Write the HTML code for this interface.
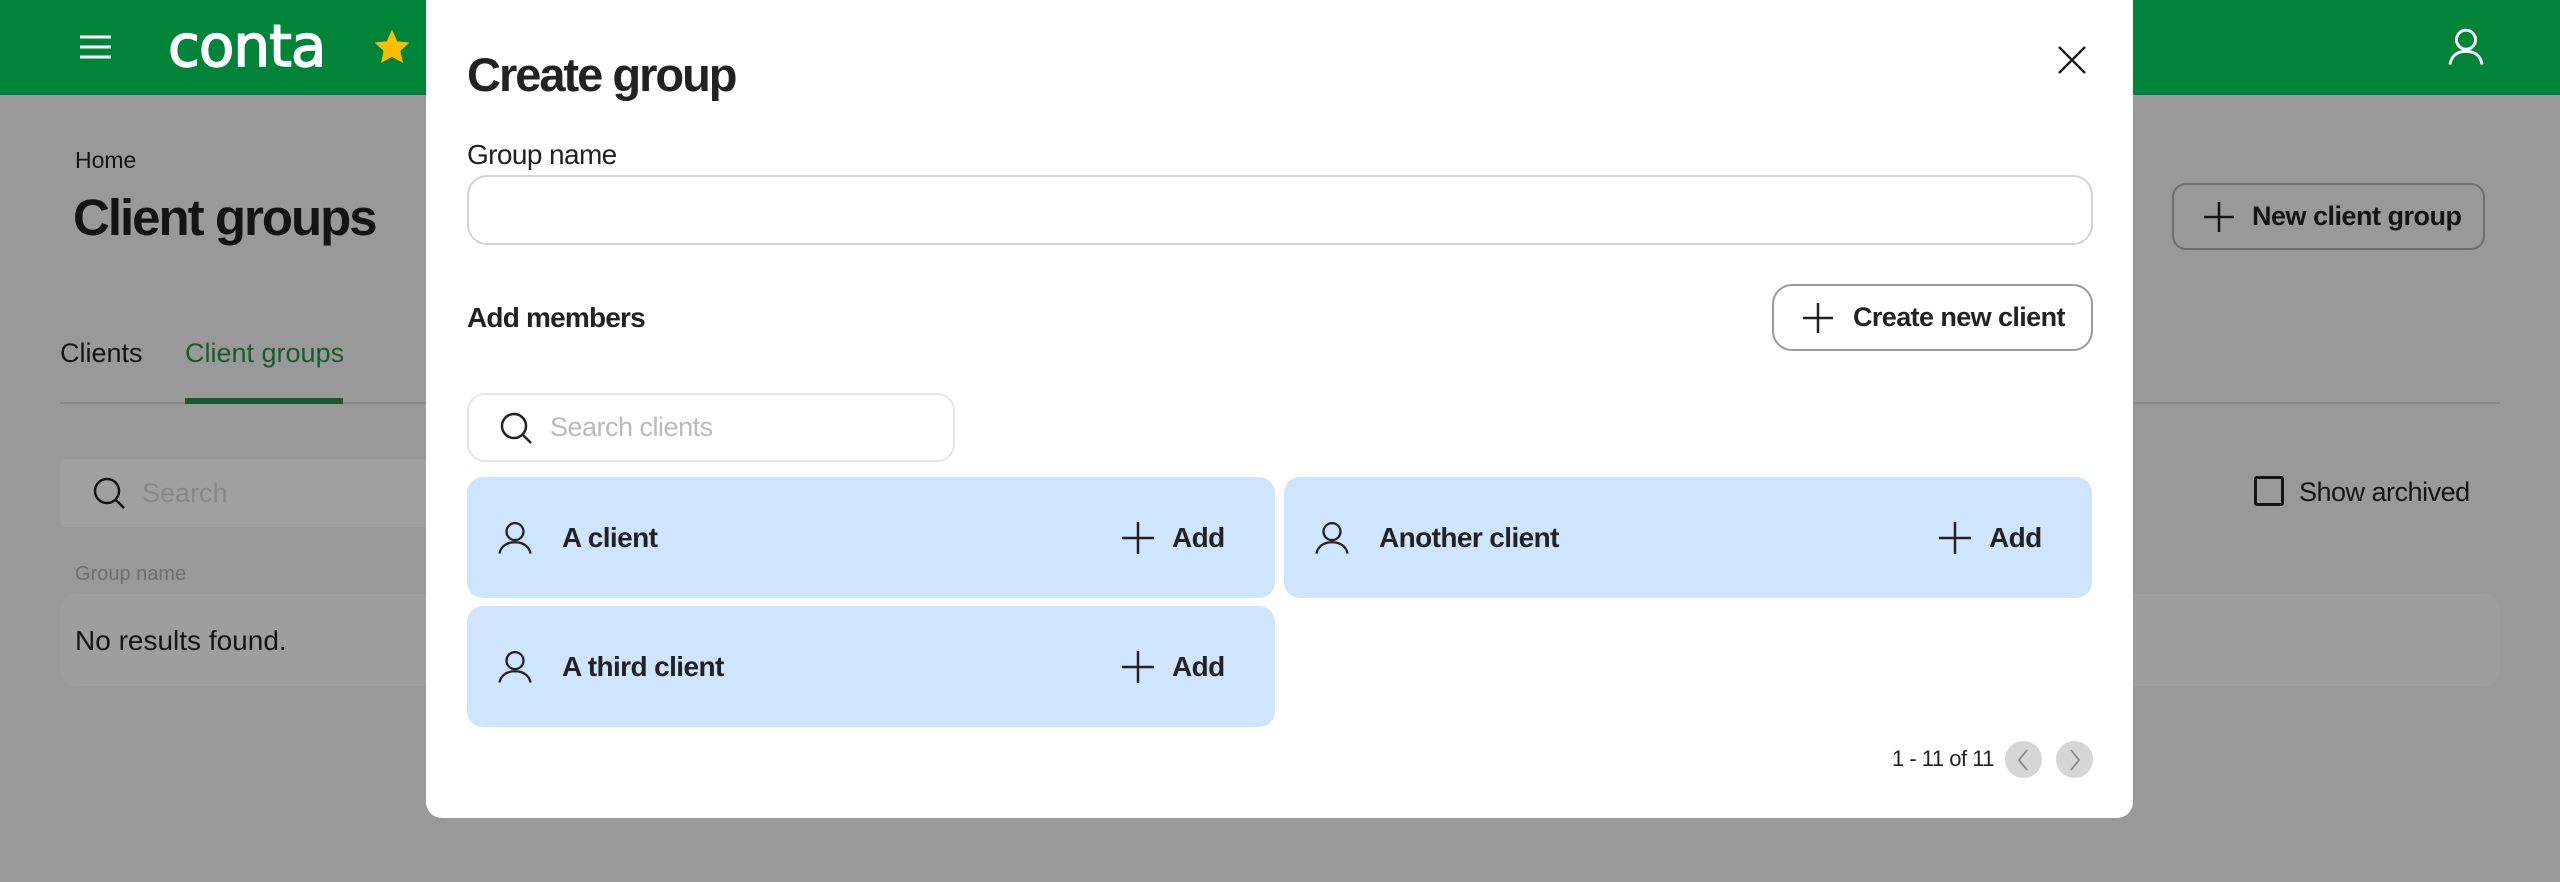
<!DOCTYPE html>
<html><head><meta charset="utf-8"><style>
*{margin:0;padding:0;box-sizing:border-box}
body{width:2560px;height:882px;overflow:hidden;background:#999;font-family:"Liberation Sans",sans-serif;color:#141414;position:relative}
.a{position:absolute;white-space:nowrap}
.b{font-weight:bold}
svg{position:absolute;overflow:visible}
</style></head><body>
<div class="a" style="left:0;top:0;width:2560px;height:95px;background:#00843a"></div>
<svg style="left:80px;top:34px" width="32" height="26"><path d="M0 3H31M0 13H31M0 23H31" stroke="#fff" stroke-width="3"/></svg>
<div class="a" style="left:168px;top:12px;font-size:58px;color:#fff;letter-spacing:-1px;font-family:'DejaVu Sans',sans-serif;-webkit-text-stroke:1.5px #fff">conta</div>
<svg style="left:372px;top:28px" width="40" height="40" viewBox="0 0 24 24"><path d="M12 1l3.2 7 7.3.7-5.5 5 1.6 7.3L12 17.3 5.4 21l1.6-7.3-5.5-5 7.3-.7z" fill="#fbbd00"/></svg>
<svg style="left:2448px;top:28px" width="36" height="38" viewBox="0 0 24 26"><circle cx="12" cy="8" r="6.5" fill="none" stroke="#fff" stroke-width="2"/><path d="M1 25c1-6 5-9 11-9s10 3 11 9" fill="none" stroke="#fff" stroke-width="2"/></svg>
<div class="a" style="left:75px;top:147px;font-size:23px">Home</div>
<div class="a b" style="left:73px;top:188px;font-size:51px;letter-spacing:-2px">Client groups</div>
<div class="a" style="left:60px;top:338px;font-size:27px">Clients</div>
<div class="a" style="left:185px;top:338px;font-size:27px;color:#165c2e">Client groups</div>
<div class="a" style="left:60px;top:402px;width:2440px;height:2px;background:#8a8a8a"></div>
<div class="a" style="left:185px;top:398px;width:158px;height:6px;background:#165c2e"></div>
<div class="a" style="left:60px;top:459px;width:400px;height:68px;background:#a0a0a0;border-radius:6px"></div>
<svg style="left:92px;top:476px" width="34" height="36"><circle cx="15" cy="15" r="12" fill="none" stroke="#141414" stroke-width="2.5"/><path d="M24 24l8 8" stroke="#141414" stroke-width="2.5"/></svg>
<div class="a" style="left:142px;top:478px;font-size:27px;color:#878787">Search</div>
<div class="a" style="left:75px;top:563px;font-size:20px;color:#6e6e6e">Group name</div>
<div class="a" style="left:60px;top:594px;width:2440px;height:92px;background:#9e9e9e;border-radius:16px"></div>
<div class="a" style="left:75px;top:625px;font-size:28px">No results found.</div>
<div class="a" style="left:2172px;top:183px;width:313px;height:67px;border:2px solid #6e6e6e;border-radius:14px"></div>
<svg style="left:2204px;top:202px" width="30" height="30"><path d="M15 0V30M0 15H30" stroke="#141414" stroke-width="2.5"/></svg>
<div class="a b" style="left:2252px;top:201px;font-size:27px;letter-spacing:-.5px">New client group</div>
<div class="a" style="left:2254px;top:476px;width:30px;height:30px;border:3px solid #141414;border-radius:3px"></div>
<div class="a" style="left:2299px;top:477px;font-size:27px;letter-spacing:-.5px">Show archived</div>
<div class="a" style="left:426px;top:-20px;width:1707px;height:838px;background:#fff;border-radius:16px"></div>
<div class="a b" style="left:467px;top:47px;font-size:47px;color:#222;letter-spacing:-2px">Create group</div>
<svg style="left:2058px;top:46px" width="28" height="28"><path d="M1 1L27 27M27 1L1 27" stroke="#222" stroke-width="2.5"/></svg>
<div class="a" style="left:467px;top:139px;font-size:28px;color:#222;letter-spacing:-.6px">Group name</div>
<div class="a" style="left:467px;top:175px;width:1626px;height:70px;border:2px solid #d4d4d4;border-radius:20px"></div>
<div class="a b" style="left:467px;top:302px;font-size:28px;color:#222;letter-spacing:-.8px">Add members</div>
<div class="a" style="left:1772px;top:284px;width:321px;height:67px;border:2px solid #9a9a9a;border-radius:20px"></div>
<svg style="left:1803px;top:303px" width="30" height="30"><path d="M15 0V30M0 15H30" stroke="#222" stroke-width="2.5"/></svg>
<div class="a b" style="left:1853px;top:302px;font-size:27px;color:#222;letter-spacing:-.6px">Create new client</div>
<div class="a" style="left:467px;top:393px;width:488px;height:69px;border:2px solid #e6e6e6;border-radius:18px"></div>
<svg style="left:499px;top:411px" width="34" height="36"><circle cx="15" cy="15" r="12" fill="none" stroke="#222" stroke-width="2.5"/><path d="M24 24l8 8" stroke="#222" stroke-width="2.5"/></svg>
<div class="a" style="left:550px;top:412px;font-size:27px;color:#bbb;letter-spacing:-.5px">Search clients</div>
<div class="a" style="left:467px;top:477px;width:808px;height:121px;background:#cfe4fd;border-radius:16px"></div>
<div class="a" style="left:1284px;top:477px;width:808px;height:121px;background:#cfe4fd;border-radius:16px"></div>
<div class="a" style="left:467px;top:606px;width:808px;height:121px;background:#cfe4fd;border-radius:16px"></div>
<svg style="left:498px;top:521px" width="34" height="34" viewBox="0 0 24 24"><circle cx="12" cy="7.5" r="6" fill="none" stroke="#222" stroke-width="1.6"/><path d="M1 23c1-5 5-8 11-8s10 3 11 8" fill="none" stroke="#222" stroke-width="1.6"/></svg>
<div class="a b" style="left:562px;top:522px;font-size:28px;color:#222;letter-spacing:-.6px">A client</div>
<svg style="left:1122px;top:522px" width="32" height="32"><path d="M16 0V32M0 16H32" stroke="#222" stroke-width="2.5"/></svg>
<div class="a b" style="left:1172px;top:522px;font-size:28px;color:#222;letter-spacing:-.6px">Add</div>
<svg style="left:1315px;top:521px" width="34" height="34" viewBox="0 0 24 24"><circle cx="12" cy="7.5" r="6" fill="none" stroke="#222" stroke-width="1.6"/><path d="M1 23c1-5 5-8 11-8s10 3 11 8" fill="none" stroke="#222" stroke-width="1.6"/></svg>
<div class="a b" style="left:1379px;top:522px;font-size:28px;color:#222;letter-spacing:-.6px">Another client</div>
<svg style="left:1939px;top:522px" width="32" height="32"><path d="M16 0V32M0 16H32" stroke="#222" stroke-width="2.5"/></svg>
<div class="a b" style="left:1989px;top:522px;font-size:28px;color:#222;letter-spacing:-.6px">Add</div>
<svg style="left:498px;top:650px" width="34" height="34" viewBox="0 0 24 24"><circle cx="12" cy="7.5" r="6" fill="none" stroke="#222" stroke-width="1.6"/><path d="M1 23c1-5 5-8 11-8s10 3 11 8" fill="none" stroke="#222" stroke-width="1.6"/></svg>
<div class="a b" style="left:562px;top:651px;font-size:28px;color:#222;letter-spacing:-.6px">A third client</div>
<svg style="left:1122px;top:651px" width="32" height="32"><path d="M16 0V32M0 16H32" stroke="#222" stroke-width="2.5"/></svg>
<div class="a b" style="left:1172px;top:651px;font-size:28px;color:#222;letter-spacing:-.6px">Add</div>
<div class="a" style="left:1892px;top:746px;font-size:22px;color:#222;letter-spacing:-.5px">1 - 11 of 11</div>
<div class="a" style="left:2005px;top:741px;width:37px;height:37px;border-radius:50%;background:#d6d6d6"></div>
<div class="a" style="left:2056px;top:741px;width:37px;height:37px;border-radius:50%;background:#d6d6d6"></div>
<svg style="left:2017px;top:749px" width="12" height="22"><path d="M10 1L2 11l8 10" fill="none" stroke="#888" stroke-width="1.8"/></svg>
<svg style="left:2069px;top:749px" width="12" height="22"><path d="M2 1l8 10-8 10" fill="none" stroke="#888" stroke-width="1.8"/></svg>
</body></html>
